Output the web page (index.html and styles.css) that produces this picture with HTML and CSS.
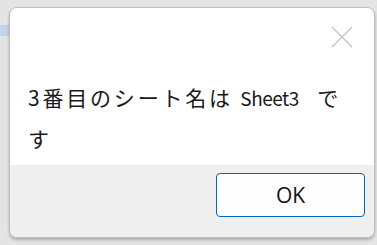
FILE: index.html
```html
<!DOCTYPE html>
<html lang="ja">
<head>
    <meta charset="UTF-8">
    <meta name="viewport" content="width=device-width, initial-scale=1.0">
    <title>Sheet name</title>
    <link rel="stylesheet" href="styles.css">
</head>
<body>
    <div class="back-window"></div>
    <div class="dialog">
        <div class="dialog-body">
            <div class="title-row">
                <button class="close-btn" aria-label="閉じる">
                    <svg width="22" height="22" viewBox="0 0 22 22">
                        <path d="M1 1 L21 21 M21 1 L1 21" stroke="#c4c4c4" stroke-width="1.4" fill="none"/>
                    </svg>
                </button>
            </div>
            <p class="message">3番目のシート名は <span class="latin">Sheet3</span> です</p>
        </div>
        <div class="dialog-footer">
            <button class="ok-btn">OK</button>
        </div>
    </div>
</body>
</html>
```

FILE: styles.css
```css
body {
    font-family: "Noto Sans CJK JP", "Noto Sans", sans-serif;
    margin: 0;
    padding: 7px 2px 7px 9px;
    height: 245px;
    box-sizing: border-box;
    background-color: #e4e4e4;
    overflow: hidden;
}

.back-window {
    position: absolute;
    left: 0;
    top: 25px;
    width: 9px;
    height: 11px;
    background-color: #c3d3ea;
}

.dialog {
    position: relative;
    height: 231px;
    box-sizing: border-box;
    border: 1px solid #bdbdbd;
    border-radius: 8px;
    overflow: hidden;
    display: flex;
    flex-direction: column;
    box-shadow: 0 2px 3px rgba(0, 0, 0, 0.25);
}

.dialog-body {
    background-color: #fff;
    height: 157px;
}

.title-row {
    display: flex;
    justify-content: flex-end;
    padding: 18px 21px 0 0;
}

.close-btn {
    border: none;
    background: none;
    padding: 0;
    width: 22px;
    height: 22px;
}

.message {
    margin: 0;
    padding: 29px 20px 0 18px;
    font-size: 21px;
    line-height: 41px;
    letter-spacing: 2.8px;
    color: #1a1a1a;
}

.latin {
    font-size: 19px;
    letter-spacing: -0.5px;
    margin-right: 11px;
}

.dialog-footer {
    flex: 1;
    background-color: #efefef;
    display: flex;
    justify-content: flex-end;
    align-items: flex-start;
    padding: 8px 9px 0 0;
}

.ok-btn {
    width: 149px;
    height: 44px;
    border: 1px solid #0067c0;
    border-radius: 4px;
    background-color: #fdfdfd;
    font-family: "Open Sans", sans-serif;
    font-size: 21px;
    color: #111;
}
```
